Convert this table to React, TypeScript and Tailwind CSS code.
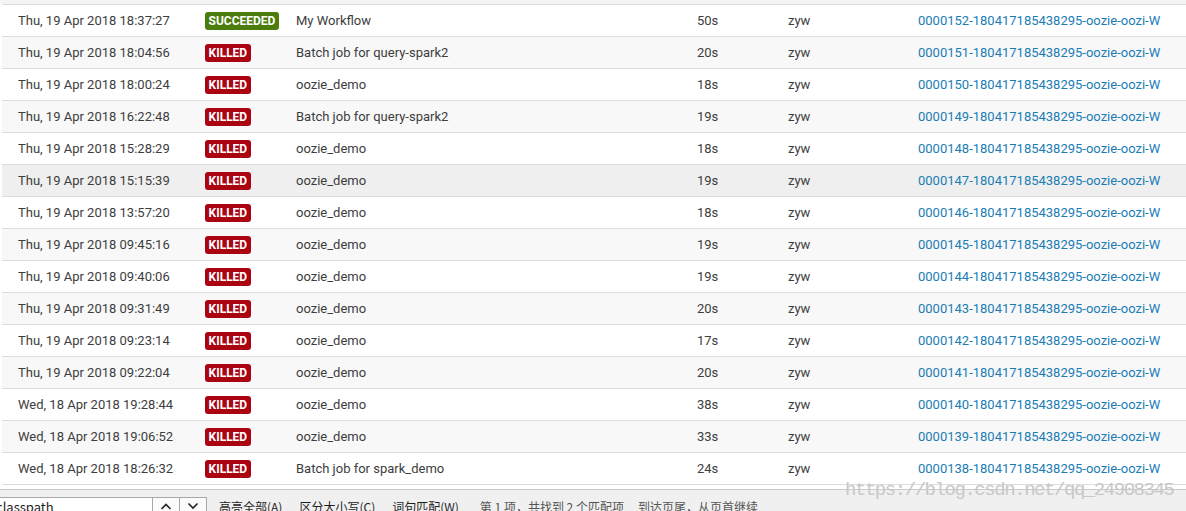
import React from "react";

// ── Data ───────────────────────────────────────────────────────────────────
type Row = {
  date: string;
  status: "SUCCEEDED" | "KILLED";
  name: string;
  duration: string;
  id: string;
};

const ROWS: Row[] = [
  { date: "Thu, 19 Apr 2018 18:37:27", status: "SUCCEEDED", name: "My Workflow", duration: "50s", id: "0000152" },
  { date: "Thu, 19 Apr 2018 18:04:56", status: "KILLED", name: "Batch job for query-spark2", duration: "20s", id: "0000151" },
  { date: "Thu, 19 Apr 2018 18:00:24", status: "KILLED", name: "oozie_demo", duration: "18s", id: "0000150" },
  { date: "Thu, 19 Apr 2018 16:22:48", status: "KILLED", name: "Batch job for query-spark2", duration: "19s", id: "0000149" },
  { date: "Thu, 19 Apr 2018 15:28:29", status: "KILLED", name: "oozie_demo", duration: "18s", id: "0000148" },
  { date: "Thu, 19 Apr 2018 15:15:39", status: "KILLED", name: "oozie_demo", duration: "19s", id: "0000147" },
  { date: "Thu, 19 Apr 2018 13:57:20", status: "KILLED", name: "oozie_demo", duration: "18s", id: "0000146" },
  { date: "Thu, 19 Apr 2018 09:45:16", status: "KILLED", name: "oozie_demo", duration: "19s", id: "0000145" },
  { date: "Thu, 19 Apr 2018 09:40:06", status: "KILLED", name: "oozie_demo", duration: "19s", id: "0000144" },
  { date: "Thu, 19 Apr 2018 09:31:49", status: "KILLED", name: "oozie_demo", duration: "20s", id: "0000143" },
  { date: "Thu, 19 Apr 2018 09:23:14", status: "KILLED", name: "oozie_demo", duration: "17s", id: "0000142" },
  { date: "Thu, 19 Apr 2018 09:22:04", status: "KILLED", name: "oozie_demo", duration: "20s", id: "0000141" },
  { date: "Wed, 18 Apr 2018 19:28:44", status: "KILLED", name: "oozie_demo", duration: "38s", id: "0000140" },
  { date: "Wed, 18 Apr 2018 19:06:52", status: "KILLED", name: "oozie_demo", duration: "33s", id: "0000139" },
  { date: "Wed, 18 Apr 2018 18:26:32", status: "KILLED", name: "Batch job for spark_demo", duration: "24s", id: "0000138" },
];

// ── Pieces ─────────────────────────────────────────────────────────────────
function Badge({ status }: { status: Row["status"] }) {
  const ok = status === "SUCCEEDED";
  return (
    <span
      className={
        "inline-flex h-[18px] items-center rounded-[3px] px-[3.5px] text-[12px] font-bold leading-none text-white " +
        (ok ? "bg-[#4c7d0c]" : "bg-[#aa0412]")
      }
    >
      {status}
    </span>
  );
}

function JobRow({ row, index }: { row: Row; index: number }) {
  const hovered = index === 5;
  const striped = index % 2 === 1;
  const bg = hovered ? "bg-[#efefef]" : striped ? "bg-[#f8f8f8]" : "bg-white";
  return (
    <div className={"grid h-[32px] grid-cols-[203px_91px_401px_91px_130px_1fr] items-center border-b border-[#dddddd] text-[13px] text-[#3d3d3d] " + bg}>
      <div className="pl-[16px] whitespace-nowrap">{row.date}</div>
      <div>
        <Badge status={row.status} />
      </div>
      <div className="whitespace-nowrap">{row.name}</div>
      <div>{row.duration}</div>
      <div>zyw</div>
      <div className="whitespace-nowrap text-[#1a7db4]">{row.id}-180417185438295-oozie-oozi-W</div>
    </div>
  );
}

// ── Find bar ───────────────────────────────────────────────────────────────
function FindBar() {
  return (
    <div className="relative h-[22px] border-t border-[#c9c9c9] bg-[#f0f0f0] pt-[7px] font-['Noto_Sans_CJK_SC','Microsoft_YaHei',sans-serif] text-[12px] leading-[20px] text-[#1e1e1e]">
      <div className="flex items-start">
        <div className="h-[20px] w-[153px] overflow-hidden border border-[#a8a8a8] border-l-0 bg-white">
          <span className="-ml-[4px] block text-[13px] leading-[18px]">classpath</span>
        </div>
        <div className="flex h-[20px] w-[27px] items-start justify-center border-y border-r border-[#a8a8a8] bg-[#fbfbfb]">
          <svg width="12" height="8" viewBox="0 0 12 8" className="mt-[4px]">
            <path d="M1.5 7 L6 2.5 L10.5 7" fill="none" stroke="#222" strokeWidth="1.6" />
          </svg>
        </div>
        <div className="flex h-[20px] w-[27px] items-start justify-center border-y border-r border-[#a8a8a8] bg-[#fbfbfb]">
          <svg width="12" height="8" viewBox="0 0 12 8" className="mt-[4px]">
            <path d="M1.5 1.5 L6 6 L10.5 1.5" fill="none" stroke="#222" strokeWidth="1.6" />
          </svg>
        </div>
        <span className="ml-[12px] whitespace-nowrap">高亮全部(A)</span>
        <span className="ml-[17px] whitespace-nowrap">区分大小写(C)</span>
        <span className="ml-[17px] whitespace-nowrap">词句匹配(W)</span>
        <span className="ml-[21px] whitespace-nowrap text-[#555]">第 1 项，共找到 2 个匹配项</span>
        <span className="ml-[14px] whitespace-nowrap text-[#555]">到达页尾，从页首继续</span>
      </div>
    </div>
  );
}

// ── Page ───────────────────────────────────────────────────────────────────
export default function App() {
  return (
    <div className="relative h-[511px] w-[1186px] overflow-hidden bg-white font-['Roboto','Liberation_Sans',sans-serif]">
      <div className="h-[4px] bg-[#f4f4f4]" />
      <div className="ml-[2px] border-t border-[#dddddd]">
        {ROWS.map((r, i) => (
          <JobRow key={r.id} row={r} index={i} />
        ))}
      </div>
      <div className="h-[4px] bg-white" />
      <FindBar />
      {/* watermark */}
      <div className="absolute left-[845px] top-[478px] whitespace-nowrap font-['Liberation_Mono',monospace] text-[19px] leading-[24px] tracking-[-1.45px] text-[#c8c8c8]">
        https://blog.csdn.net/qq_24908345
      </div>
    </div>
  );
}
